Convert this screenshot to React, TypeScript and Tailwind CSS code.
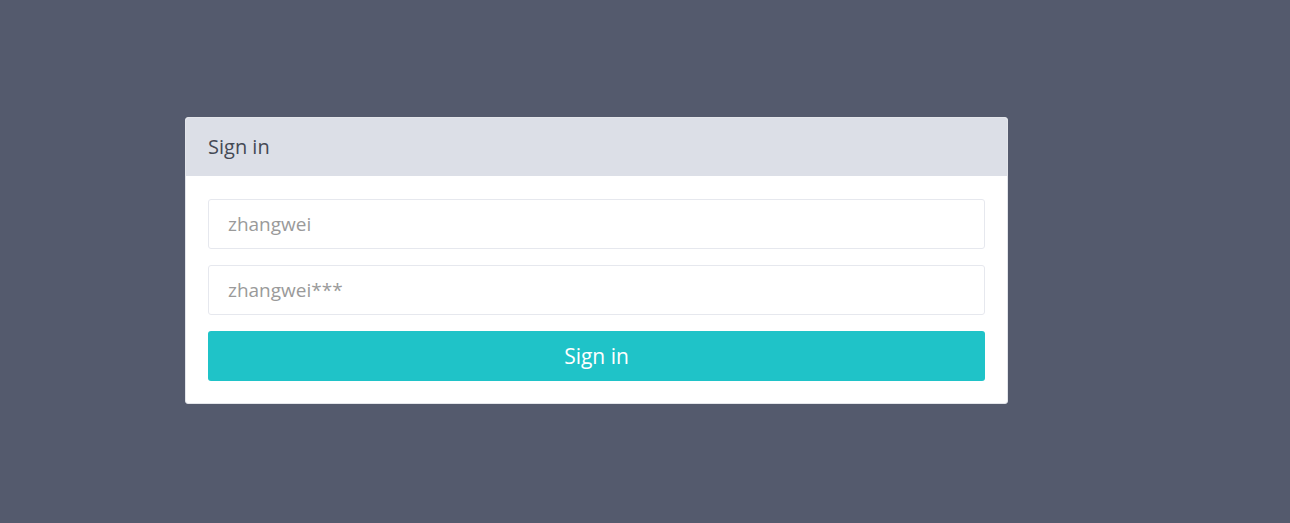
export default function App() {
  return (
    <div
      className="min-h-[523px] w-full bg-[#545a6d] pt-[117px] pl-[185px]"
      style={{ fontFamily: '"Open Sans", sans-serif' }}
    >
      <div className="w-[823px] rounded-[3px] border border-[#e3e5ea] bg-white overflow-hidden">
        <div className="h-[58px] bg-[#dcdfe7] flex items-center px-[22px]">
          <span className="text-[20px] text-[#454a55]">Sign in</span>
        </div>
        <div className="px-[22px] pt-[23px] pb-[22px] flex flex-col gap-[16px]">
          <div className="h-[50px] rounded-[3px] border border-[#e6e8ee] flex items-center px-[19px] pt-[1px] text-[19px] text-[#9a9a9a]">
            zhangwei
          </div>
          <div className="h-[50px] rounded-[3px] border border-[#e6e8ee] flex items-center px-[19px] pt-[1px] text-[19px] text-[#9a9a9a]">
            zhangwei***
          </div>
          <div className="h-[50px] rounded-[3px] bg-[#1fc3c8] flex items-center justify-center pt-[1px] text-[21px] text-white">
            Sign in
          </div>
        </div>
      </div>
    </div>
  );
}
